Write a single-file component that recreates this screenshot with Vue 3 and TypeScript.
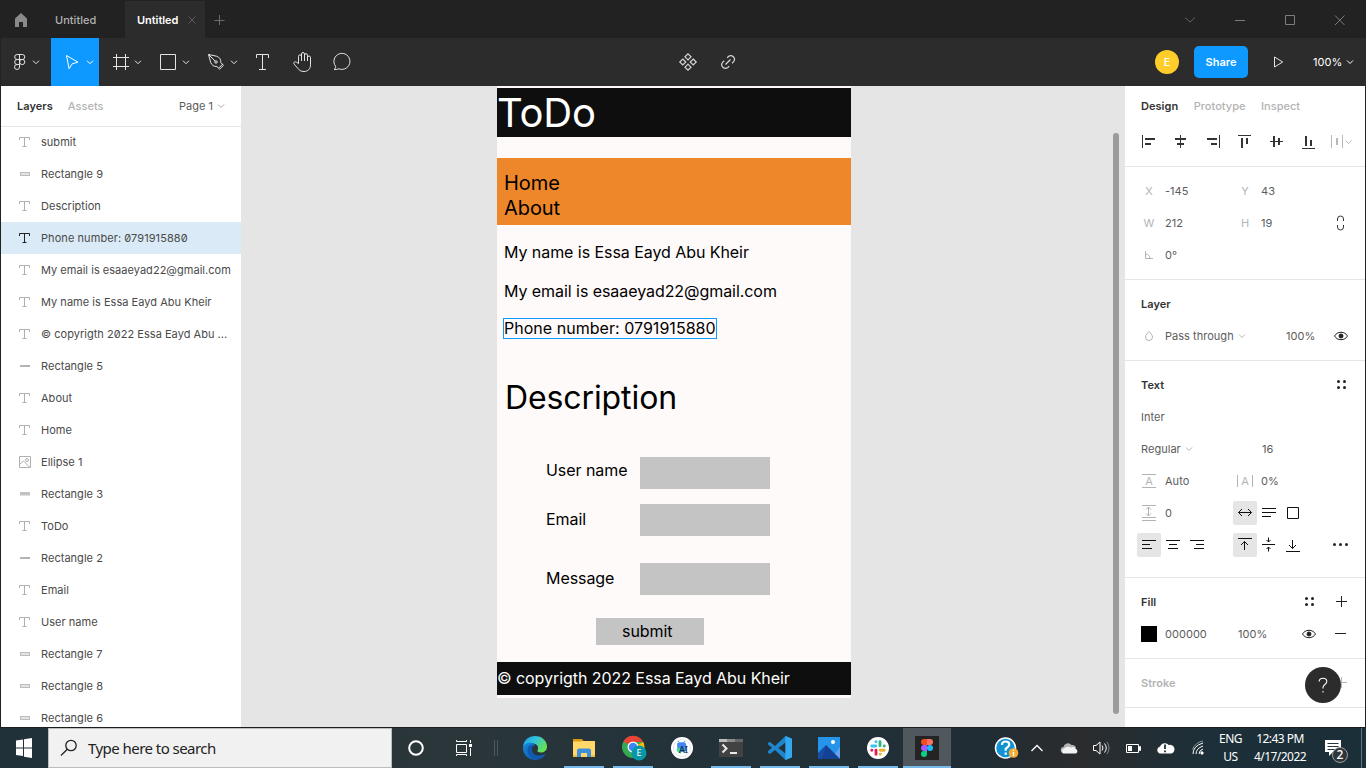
<script setup lang="ts">
type LayerKind = 'text' | 'bar' | 'thin' | 'mid' | 'image'

interface Layer {
  name: string
  kind: LayerKind
  selected?: boolean
}

const layers: Layer[] = [
  { name: 'submit', kind: 'text' },
  { name: 'Rectangle 9', kind: 'bar' },
  { name: 'Description', kind: 'text' },
  { name: 'Phone number: 0791915880', kind: 'text', selected: true },
  { name: 'My email is esaaeyad22@gmail.com', kind: 'text' },
  { name: 'My name is Essa Eayd Abu Kheir', kind: 'text' },
  { name: '© copyrigth 2022 Essa Eayd Abu ...', kind: 'text' },
  { name: 'Rectangle 5', kind: 'thin' },
  { name: 'About', kind: 'text' },
  { name: 'Home', kind: 'text' },
  { name: 'Ellipse 1', kind: 'image' },
  { name: 'Rectangle 3', kind: 'mid' },
  { name: 'ToDo', kind: 'text' },
  { name: 'Rectangle 2', kind: 'thin' },
  { name: 'Email', kind: 'text' },
  { name: 'User name', kind: 'text' },
  { name: 'Rectangle 7', kind: 'bar' },
  { name: 'Rectangle 8', kind: 'bar' },
  { name: 'Rectangle 6', kind: 'bar' },
]

// Each bar is [x, y, width, height] inside a 32px cell
type Bar = [number, number, number, number]
const alignments: Bar[][] = [
  [[9, 9, 1, 13], [12, 12, 10, 2], [12, 17, 6, 2]],
  [[15, 9, 1, 13], [10, 12, 11, 2], [12, 17, 7, 2]],
  [[22, 9, 1, 13], [10, 12, 10, 2], [14, 17, 6, 2]],
  [[9, 9, 13, 1], [12, 12, 2, 10], [17, 12, 2, 6]],
  [[9, 15, 13, 1], [12, 10, 2, 11], [17, 12, 2, 7]],
  [[9, 22, 13, 1], [12, 10, 2, 10], [17, 14, 2, 6]],
]
</script>

<template>
  <div class="screen">
    <header class="tabs">
      <svg class="home" width="54" height="38" viewBox="0 0 54 38"><path d="M15 18.5 21 13l6 5.500V27h-4v-5h-4v5h-4z" fill="#8a8a8a" /></svg>
      <span class="tab">Untitled</span>
      <span class="tab active">Untitled
        <svg width="8" height="8" viewBox="0 0 8 8"><path d="M.5.5l7 7M7.500.500l-7 7" stroke="#5c5c5c" /></svg>
      </span>
      <svg width="30" height="38" viewBox="0 0 30 38"><path d="M14.500 15v10M9.500 20.500h10" stroke="#6c6c6c" /></svg>
      <span class="grow"></span>
      <svg width="201" height="38" viewBox="0 0 201 38" fill="none" stroke="#7d7d7d">
        <path d="M20 17.500l5 4.500 5-4.500" stroke="#666" /><path d="M70 20.500h10M120.500 15.500h9v9h-9zM170 15.500l9.500 9.500M179.500 15.500l-9.500 9.500" />
      </svg>
    </header>

    <div class="toolbar">
      <svg width="50" height="48" viewBox="0 0 50 48" class="tool">
        <path d="M18.500 16.500h-2.300a2.500 2.500 0 0 0 0 5h2.300zM18.500 16.500h2.800a2.500 2.500 0 0 1 0 5h-2.800zM18.500 21.500h-2.300a2.500 2.500 0 0 0 0 5h2.300zM18.500 26.500h-2.300a2.500 2.500 0 1 0 2.300 2.500z" />
        <circle cx="21.200" cy="24" r="2.600" />
        <path d="M32 22.700l3 3 3-3" />
      </svg>
      <svg width="48" height="48" viewBox="0 0 48 48" class="tool on">
        <path d="M15.500 17.500l11.500 6.700-5.800 1.600-3.100 5z" /><path d="M36 22.700l3 3 3-3" />
      </svg>
      <svg width="48" height="48" viewBox="0 0 48 48" class="tool">
        <path d="M17.500 16v16M26.500 16v16M14 19.500h16M14 28.500h16M36 22.700l3 3 3-3" />
      </svg>
      <svg width="48" height="48" viewBox="0 0 48 48" class="tool">
        <path d="M13.500 16.500h15v15h-15zM36 22.700l3 3 3-3" />
      </svg>
      <svg width="48" height="48" viewBox="0 0 48 48" class="tool">
        <path d="M13.500 16.500l8 1.700c3 .8 4.500 3.300 4.300 6.300l2.700 2.900-3.900 3.800-2.700-2.700c-3 .2-5.200-1.400-6.200-4zM13.500 16.500l6.700 6.700M23.700 30l4-3.900" /><circle cx="21" cy="24" r="1.200" />
        <path d="M36 22.700l3 3 3-3" />
      </svg>
      <svg width="40" height="48" viewBox="0 0 40 48" class="tool">
        <path d="M13.500 20v-3.500h12V20M19.500 16.500v15M16 31.500h7" />
      </svg>
      <svg width="40" height="48" viewBox="0 0 40 48" class="tool">
        <path d="M15.500 25.500v-7a1.500 1.500 0 0 1 3-.2V23v-7a1.500 1.500 0 0 1 3 0v7-5.800a1.500 1.500 0 0 1 3 0V23v-3.500a1.500 1.500 0 0 1 3 0v7.300c0 4-2.500 6.700-6.500 6.700-3.200 0-4.800-1.300-6.300-3.300l-3.500-4c-1.300-1.600.7-3.200 2.200-2z" />
      </svg>
      <svg width="40" height="48" viewBox="0 0 40 48" class="tool">
        <path d="M11 31.500c1.400-1 1.800-1.900 1.600-3.200a8 8 0 1 1 3.300 2.500c-1.300.6-2.800.7-4.900.7z" />
      </svg>
      <svg class="middle" width="80" height="48" viewBox="0 0 80 48" fill="none" stroke="#d6d6d6" stroke-width="1.200">
        <path d="M20 15.800l3 3-3 3-3-3zM14.800 21l3 3-3 3-3-3zM25.200 21l3 3-3 3-3-3zM20 26.200l3 3-3 3-3-3z" />
        <path d="M57.500 26.500l5-5M59.200 19.800l1.200-1.300a3.700 3.700 0 0 1 5.200 5.200l-1.600 1.500M56.200 22.800l-1.600 1.500a3.700 3.700 0 0 0 5.200 5.200l1.300-1.300" />
      </svg>
      <span class="grow"></span>
      <span class="avatar">E</span>
      <span class="share">Share</span>
      <svg class="play" width="12" height="14" viewBox="0 0 12 14" fill="none" stroke="#e5e5e5"><path d="M1.500 2v10l8.200-5z" /></svg>
      <span class="zoom">100%</span>
      <svg class="zoomchev" width="8" height="6" viewBox="0 0 8 6" fill="none" stroke="#fff"><path d="M1 1.500l3 3 3-3" /></svg>
    </div>

    <main class="workspace">
      <aside class="left">
        <div class="lefthead">
          <b>Layers</b><b class="muted">Assets</b><span class="grow"></span><span>Page 1</span>
          <svg width="8" height="6" viewBox="0 0 8 6" fill="none" stroke="#a8a8a8"><path d="M1 1.500l3 3 3-3" /></svg>
        </div>
        <div v-for="layer in layers" :key="layer.name" class="layer" :class="{ selected: layer.selected }">
          <svg width="16" height="16" viewBox="0 0 16 16" fill="none" :stroke="layer.selected ? '#222' : '#b0b0b0'">
            <path v-if="layer.kind === 'text'" d="M2.500 6V3.500h10V6M7.500 3.500v9M5.500 12.500h4" />
            <rect v-else-if="layer.kind === 'bar'" x="3.500" y="6.500" width="9" height="3" fill="#e3e3e3" stroke="#bdbdbd" />
            <rect v-else-if="layer.kind === 'mid'" x="3" y="6" width="10" height="3.500" fill="#c2c2c2" stroke="none" />
            <rect v-else-if="layer.kind === 'thin'" x="3" y="7" width="10" height="2" fill="#b3b3b3" stroke="none" />
            <path v-else d="M2.500 2.500h11v11h-11zM3 10l3.500-3 6 6" />
            <circle v-if="layer.kind === 'image'" cx="10" cy="6" r="1.500" />
          </svg>
          <span>{{ layer.name }}</span>
        </div>
      </aside>

      <section class="canvas">
        <div class="artboard">
          <div class="shape black title-bar"></div>
          <span class="label todo">ToDo</span>
          <div class="shape orange"></div>
          <span class="label nav home-link">Home</span>
          <span class="label nav about-link">About</span>
          <span class="label name">My name is Essa Eayd Abu Kheir</span>
          <span class="label mail">My email is esaaeyad22@gmail.com</span>
          <span class="label phone">Phone number: 0791915880</span>
          <span class="label description">Description</span>
          <span class="label user">User name</span>
          <span class="label email">Email</span>
          <span class="label message">Message</span>
          <div class="shape field f1"></div>
          <div class="shape field f2"></div>
          <div class="shape field f3"></div>
          <div class="shape button"></div>
          <span class="label submit">submit</span>
          <div class="shape black footer"></div>
          <span class="label copy">© copyrigth 2022 Essa Eayd Abu Kheir</span>
        </div>
        <div class="scrollbar"></div>
      </section>

      <aside class="right">
        <div class="righthead"><b>Design</b><b class="muted">Prototype</b><b class="muted">Inspect</b></div>
        <div class="aligns">
          <svg v-for="(bars, i) in alignments" :key="i" width="32" height="32" viewBox="0 0 32 32" fill="#333">
            <rect v-for="(b, j) in bars" :key="j" :x="b[0]" :y="b[1]" :width="b[2]" :height="b[3]" />
          </svg>
          <svg width="32" height="32" viewBox="0 0 32 32" fill="#b8b8b8">
            <path d="M6 9h1v13H6zM17 9h1v13h-1zM11 12h2v7h-2z" /><path d="M20.500 14.500l3 3 3-3" fill="none" stroke="#b8b8b8" />
          </svg>
        </div>

        <div class="section">
          <div class="row">
            <span class="key">X</span><span class="val">-145</span><span class="key">Y</span><span class="val">43</span>
          </div>
          <div class="row">
            <span class="key">W</span><span class="val">212</span><span class="key">H</span><span class="val">19</span>
            <svg width="32" height="32" viewBox="0 0 32 32" fill="none" stroke="#333"><path d="M12.500 14v-2a3 3 0 0 1 3-3 3 3 0 0 1 3 3v2M12.500 18v2a3 3 0 0 0 3 3 3 3 0 0 0 3-3v-2" /></svg>
          </div>
          <div class="row">
            <svg width="32" height="32" viewBox="0 0 32 32" fill="none" stroke="#b3b3b3"><path d="M12.500 12v7.500h7.500M12.500 15c2.500 0 4.500 2 4.500 4.500" /></svg>
            <span class="val">0°</span>
          </div>
        </div>

        <div class="section">
          <div class="row head"><b>Layer</b></div>
          <div class="row">
            <svg width="32" height="32" viewBox="0 0 32 32" fill="none" stroke="#b3b3b3"><path d="M16 11.500c1.500 1.800 3.500 3.500 3.500 5.500a3.500 3.500 0 0 1-7 0c0-2 2-3.700 3.500-5.500z" /></svg>
            <span class="pass">Pass through</span>
            <svg class="chev" width="8" height="6" viewBox="0 0 8 6" fill="none" stroke="#b3b3b3"><path d="M1 1.500l3 3 3-3" /></svg>
            <span class="grow"></span><span class="opacity">100%</span>
            <svg width="32" height="32" viewBox="0 0 32 32" fill="none" stroke="#222"><path d="M9.500 16c1.300-2.300 3.600-3.700 6.500-3.700s5.200 1.400 6.500 3.700c-1.300 2.300-3.600 3.700-6.500 3.700S10.800 18.300 9.500 16z" /><circle cx="16" cy="16" r="2" fill="#222" /></svg>
          </div>
        </div>

        <div class="section text-section">
          <div class="row head"><b>Text</b><span class="grow"></span>
            <svg width="32" height="32" viewBox="0 0 32 32" fill="#222"><circle cx="13.500" cy="12.500" r="1.500" /><circle cx="19.500" cy="12.500" r="1.500" /><circle cx="13.500" cy="18.500" r="1.500" /><circle cx="19.500" cy="18.500" r="1.500" /></svg>
          </div>
          <div class="row head">Inter</div>
          <div class="row head"><span class="weight">Regular</span>
            <svg class="chev" width="8" height="6" viewBox="0 0 8 6" fill="none" stroke="#b3b3b3"><path d="M1 1.500l3 3 3-3" /></svg>
            <span class="grow"></span><span class="size">16</span>
          </div>
          <div class="row">
            <span class="key boxed-v">A</span><span class="val">Auto</span><span class="key boxed-h">A</span><span class="val">0%</span>
          </div>
          <div class="row">
            <svg width="32" height="32" viewBox="0 0 32 32" fill="none" stroke="#b3b3b3"><path d="M9 8.500h14M9 20.500h14M9 23.500h14M15.500 10v9M13 12.500l2.500-2.500 2.500 2.500M13 16.500l2.500 2.500 2.500-2.500" /></svg>
            <span class="val resize">0</span>
            <svg class="btn on" width="24" height="24" viewBox="0 0 24 24"><path d="M5.500 11.500h13M9 8l-3.500 3.500L9 15M15 8l3.500 3.500L15 15" /></svg>
            <svg class="btn" width="24" height="24" viewBox="0 0 24 24"><path d="M5 7.500h14M5 11.500h14M5 15.500h9" /></svg>
            <svg class="btn" width="24" height="24" viewBox="0 0 24 24"><path d="M6.500 6.500h11v11h-11z" /></svg>
          </div>
          <div class="row buttons">
            <svg class="btn on" width="24" height="24" viewBox="0 0 24 24"><path d="M5 7.500h14M5 11.500h8M5 15.500h10" /></svg>
            <svg class="btn" width="24" height="24" viewBox="0 0 24 24"><path d="M5 7.500h14M8 11.500h8M7 15.500h10" /></svg>
            <svg class="btn" width="24" height="24" viewBox="0 0 24 24"><path d="M5 7.500h14M11 11.500h8M9 15.500h10" /></svg>
            <svg class="btn on second" width="24" height="24" viewBox="0 0 24 24"><path d="M5 5.500h14M11.500 17V8.500M8 12l3.500-3.500L15 12" /></svg>
            <svg class="btn" width="24" height="24" viewBox="0 0 24 24"><path d="M5 11.500h13M11.500 4.500v4.500M9.500 7l2 2 2-2M11.500 18.500V14M9.500 16l2-2 2 2" /></svg>
            <svg class="btn" width="24" height="24" viewBox="0 0 24 24"><path d="M5 18.500h14M11.500 7v8.500M8 12l3.500 3.500L15 12" /></svg>
            <span class="grow"></span>
            <svg width="32" height="32" viewBox="0 0 32 32" fill="#222"><circle cx="9.500" cy="15.500" r="1.500" /><circle cx="15.500" cy="15.500" r="1.500" /><circle cx="21.500" cy="15.500" r="1.500" /></svg>
          </div>
        </div>

        <div class="section">
          <div class="row head"><b>Fill</b><span class="grow"></span>
            <svg width="32" height="32" viewBox="0 0 32 32" fill="#222"><circle cx="13.500" cy="12.500" r="1.500" /><circle cx="19.500" cy="12.500" r="1.500" /><circle cx="13.500" cy="18.500" r="1.500" /><circle cx="19.500" cy="18.500" r="1.500" /></svg>
            <svg width="32" height="32" viewBox="0 0 32 32" stroke="#222"><path d="M11 15.500h11M16.500 10v11" /></svg>
          </div>
          <div class="row head">
            <span class="swatch"></span><span class="hex">000000</span><span>100%</span><span class="grow"></span>
            <svg width="32" height="32" viewBox="0 0 32 32" fill="none" stroke="#222"><path d="M9.500 16c1.300-2.300 3.600-3.700 6.500-3.700s5.200 1.400 6.500 3.700c-1.300 2.300-3.600 3.700-6.500 3.700S10.800 18.300 9.500 16z" /><circle cx="16" cy="16" r="2" fill="#222" /></svg>
            <svg width="32" height="32" viewBox="0 0 32 32" stroke="#222"><path d="M10 15.500h11" /></svg>
          </div>
        </div>

        <div class="section">
          <div class="row head"><b class="muted">Stroke</b><span class="grow"></span>
            <svg width="32" height="32" viewBox="0 0 32 32" stroke="#b3b3b3"><path d="M11 15.500h11M16.500 10v11" /></svg>
          </div>
        </div>
        <div class="help"><svg width="36" height="36" viewBox="0 0 36 36" fill="none" stroke="#fff"><path d="M14.200 14.500c0-2 1.500-3.300 3.800-3.300s3.800 1.300 3.800 3.300c0 3-3.800 3-3.800 6v1M18 24v1.500" stroke-width="1.100" /></svg></div>
      </aside>
    </main>

    <footer class="taskbar">
      <svg width="48" height="40" viewBox="0 0 48 40" fill="#fff"><path d="M16 12.500l7-1v8h-7zM24 11.300l8-1.300v9.500h-8zM16 20.500h7v7.500l-7-1zM24 20.500h8V30l-8-1.300z" /></svg>
      <div class="search">
        <svg width="18" height="18" viewBox="0 0 18 18" fill="none" stroke="#222" stroke-width="1.300"><circle cx="11" cy="6.500" r="5.200" /><path d="M7.300 10.200L1 16.500" /></svg>
        <span>Type here to search</span>
      </div>
      <svg width="119" height="40" viewBox="0 0 119 40" fill="none" stroke="#fff">
        <circle cx="24" cy="20" r="6.800" stroke-width="2" />
        <path d="M64.500 12v1.500h10V12M64.500 16.500h10v8h-10zM64.500 28v-1.500h10V28M78.500 12v3M78.500 20v8" /><path d="M77 16h3v3h-3z" fill="#fff" stroke="none" />
        <path d="M102.500 12v16M105.500 12v16" stroke="#4d585d" />
      </svg>
      <div class="apps">
        <span class="app">
          <svg width="24" height="24" viewBox="0 0 24 24">
            <defs>
              <linearGradient id="edgeTop" x1="0" y1="0" x2="1" y2=".5"><stop offset="0" stop-color="#1a9be8" /><stop offset=".5" stop-color="#32c3dc" /><stop offset="1" stop-color="#67df55" /></linearGradient>
              <linearGradient id="edgeLow" x1="0" y1="0" x2="1" y2="1"><stop offset="0" stop-color="#1789dd" /><stop offset="1" stop-color="#104b9b" /></linearGradient>
            </defs>
            <path d="M0 12C0 4 6 0 12 0c7 0 12 5 12 10.500 0 4-3 6-6 6-2.500 0-4-1-3.500-2 2-4-1-7-4.500-7-5 0-9 2-10 4.500z" fill="url(#edgeTop)" />
            <path d="M0 12c1-5 6-6 9-5 2 .6 3 2 3 2-3 1-4 3.500-3 6.500 1.500 4.500 8 5.500 13.500 2.500C20.500 21.500 17 24 12 24 5 24 0 18.500 0 12z" fill="url(#edgeLow)" />
            <path d="M4.500 14c0-4 3.500-6 7.500-5-3 1-4 3.500-3 6.500 1.500 4.500 8 5.500 13.500 2.500-2 3.300-5 5-8.500 5-5.500 0-9.500-4.500-9.500-9z" fill="#0e5ab0" />
          </svg>
        </span>
        <span class="app open">
          <svg width="24" height="24" viewBox="0 0 24 24"><path d="M1 3h9l1.500 2H1z" fill="#dd9a10" /><path d="M1 5h22v16H1z" fill="#ffd868" /><path d="M1 3.500h9v2H1z" fill="#dd9a10" /><path d="M5 21v-6.500q0-2 2-2h10q2 0 2 2V21h-4v-4H9v4z" fill="#3d8edb" /><path d="M1 19h4v2H1zM19 19h4v2h-4z" fill="#f2bf43" /></svg>
        </span>
        <span class="app open">
          <svg class="chrome" width="26" height="26" viewBox="0 0 26 26"><circle cx="12" cy="12" r="11" fill="#34a853" /><path d="M12 12l10.300-5A11 11 0 0 1 12 23l4-8z" fill="#fbbc05" /><path d="M2.500 6.500A11 11 0 0 1 22 7H12v5z" fill="#ea4335" /><circle cx="12" cy="12" r="5.500" fill="#fff" /><circle cx="12" cy="12" r="4.300" fill="#4285f4" /><circle cx="18" cy="18" r="7.500" fill="#0797a7" /><text x="18" y="21.300" text-anchor="middle" font-size="9" fill="#fff">E</text></svg>
        </span>
        <span class="app">
          <svg width="24" height="24" viewBox="0 0 24 24"><circle cx="12" cy="12" r="11" fill="#fff" /><circle cx="12" cy="12" r="8.500" fill="none" stroke="#e2e7ea" /><path d="M7 7.500q5-2.500 9 0l.5 7q-4 3-9 0z" fill="#4285f4" /><path d="M6.500 13q1 4.500 5 4.500l-2-6z" fill="#3ddc84" /><path d="M8 5l1.500 2M15 5l-1.500 2" stroke="#4285f4" /><text x="13.500" y="16.500" text-anchor="middle" font-size="9" font-weight="500" fill="#073042">AI</text></svg>
        </span>
        <span class="app open">
          <svg width="24" height="20" viewBox="0 0 24 20"><path d="M0 1h24v18H0z" fill="#424242" /><path d="M0 1h8v3H0z" fill="#bdbdbd" /><path d="M8 1h8v3H8z" fill="#8b8b8b" /><path d="M16 1h8v3h-8z" fill="#666" /><path d="M3.500 6.500l4 4-4 4M11 15h7" fill="none" stroke="#e9e9e9" stroke-width="2" /></svg>
        </span>
        <span class="app open">
          <svg width="24" height="24" viewBox="0 0 24 24"><path d="M17.500 0L24 2.700v18.600L17.500 24 7 14l-5 4-2-1.200V15l4-3.200L0 8.500V6.800L2 6l5 4zM17.500 6.500L10.500 12l7 5.500z" fill="#1f86cc" fill-rule="evenodd" /><path d="M17.500 0L24 2.700v18.600L17.500 24z" fill="#32a9f0" /></svg>
        </span>
        <span class="app open">
          <svg width="22" height="22" viewBox="0 0 22 22"><path d="M0 0h22v22H0z" fill="#2594eb" /><path d="M22 10v12h-9z" fill="#69a1ef" /><path d="M0 16l8-8 14 14H0z" fill="#164da5" /><path d="M8 8l14 14H4z" fill="#123a89" opacity=".55" /><circle cx="15" cy="5" r="2" fill="#fff" /></svg>
        </span>
        <span class="app open">
          <svg width="22" height="22" viewBox="0 0 22 22" fill="none" stroke-width="2.900" stroke-linecap="round"><circle cx="11" cy="11" r="11" fill="#fff" /><path d="M4.800 9h4M9 4.700h.1" stroke="#36c5f0" /><path d="M13 4.800v4M17.200 9h.1" stroke="#2eb67d" /><path d="M9 13.200v4M4.800 13.200h.1" stroke="#e01e5a" /><path d="M13.200 13.200h4M13.200 17.300h.1" stroke="#ecb22e" /></svg>
        </span>
        <span class="app open current">
          <svg width="24" height="24" viewBox="0 0 24 24"><rect width="24" height="24" rx="1" fill="#242424" /><path d="M12 3H9a3 3 0 0 0 0 6h3z" fill="#f24e1e" /><path d="M12 3h3a3 3 0 0 1 0 6h-3z" fill="#ff7262" /><path d="M12 9H9a3 3 0 0 0 0 6h3z" fill="#a259ff" /><circle cx="15" cy="12" r="3" fill="#1abcfe" /><path d="M12 15H9a3 3 0 1 0 3 3z" fill="#0acf83" /></svg>
        </span>
      </div>
      <span class="grow"></span>
      <svg width="224" height="40" viewBox="0 0 224 40" fill="none" stroke="#fff">
        <circle cx="15.500" cy="20" r="10" fill="#1192d4" stroke-width="1.500" />
        <path d="M12 17q0-3.500 3.700-3.500 3.500 0 3.500 3 0 2-3.500 4.200v2M15.700 24.500v2.200" stroke-width="2.200" />
        <circle cx="23.500" cy="25" r="4.800" fill="#f4ad32" stroke="none" /><path d="M23.500 24v4M23.500 21.700v1.200" stroke-width="1.400" />
        <path d="M41.500 23l5.500-5.500 5.500 5.500" stroke-width="1.300" />
        <path d="M74 25a3 3 0 0 1-.5-6 4.500 4.500 0 0 1 8-2 4 4 0 0 1 4.500 3z" fill="#b5b5b5" stroke="none" /><path d="M73 25.500a3 3 0 0 1 1-5 6 6 0 0 1 7-1 4 4 0 0 1 5 1.500 2.500 2.500 0 0 1 0 4.500z" fill="#f3f3f3" stroke="none" />
        <path d="M103.500 17.500h2.500l4-3.500v12l-4-3.500h-2.500zM112 17.500q2 2.500 0 5M114.500 15.500q3.500 4.500 0 9" /><path d="M117 14q4 6 0 12" stroke="#7d8588" />
        <path d="M136.500 16.500h12v8h-12zM149.500 18.500h1v4h-1z" /><path d="M138 18h4v5h-4z" fill="#fff" stroke="none" />
        <path d="M169.500 25.500a3.700 3.700 0 0 1 .5-7 5 5 0 0 1 8.500-1.500 4.300 4.300 0 0 1 3 8.500z" fill="#fff" stroke="none" /><path d="M175 16.500v4.500M175 22.500v1.700" stroke="#1f2f37" stroke-width="1.800" />
        <path d="M203 26q0-8 10-11M206 26q0-5.500 7-8M209 26q0-3.500 4-5" /><path d="M202.500 21.500q2.500-7 10.500-8.500" stroke="#8d9699" /><circle cx="212" cy="25" r="1.200" fill="#fff" />
      </svg>
      <span class="lang">ENG<br>US</span>
      <span class="clock">12:43 PM<br>4/17/2022</span>
      <svg width="54" height="40" viewBox="0 0 54 40"><path d="M13 12h16v12h-8l-4 4v-4h-4z" fill="#fff" /><path d="M15.500 15.500h11M15.500 18.500h11M15.500 21.500h7" stroke="#25343b" /><circle cx="28" cy="27" r="7.500" fill="#303638" stroke="#9b9fa1" /><text x="28" y="31.200" text-anchor="middle" font-size="12" font-weight="500" fill="#fff">2</text><path d="M49.500 0v40" stroke="#66747b" /></svg>
    </footer>
  </div>
</template>

<style>
html, body { margin: 0; overflow: hidden; background: #222; }
</style>

<style scoped>
.screen { width: 1366px; height: 768px; display: flex; flex-direction: column; overflow: hidden; font: 11px/16px Inter, "Noto Sans", sans-serif; letter-spacing: .03px; color: #5c5c5c; background: #222; }
.screen *, .screen *::before { box-sizing: border-box; }
svg { display: block; flex: none; }
b { font-weight: 600; color: #333; }
.muted { color: #b3b3b3; }
.grow { flex: 1; }

.tabs { height: 38px; flex: none; display: flex; align-items: center; background: #222; }
.tab { width: 71px; height: 37px; margin-top: 1px; display: flex; align-items: center; padding-left: 1px; color: #b3b3b3; font-weight: 500; }
.tab.active { width: 80px; padding: 0 9px 0 12px; justify-content: space-between; background: #2c2c2c; color: #fff; font-weight: 600; letter-spacing: -.05px; }

.toolbar { height: 48px; flex: none; display: flex; align-items: center; margin-left: 1px; padding-right: 12px; background: #2c2c2c; color: #fff; }
.tool { fill: none; stroke: #e5e5e5; }
.tool.on { background: #0d99ff; stroke: #fff; }
.middle { margin-left: 305px; }
.avatar { width: 24px; height: 24px; border-radius: 50%; background: #ffcd29; text-align: center; line-height: 24px; font-weight: 500; }
.share { width: 54px; height: 32px; margin: 0 25px 0 15px; border-radius: 5px; background: #0d99ff; text-align: center; line-height: 32px; font-weight: 600; }
.zoom { width: 33px; margin-left: 28px; }

.workspace { height: 641px; flex: none; display: flex; margin: 0 1px; background: #e5e5e5; }
.left { width: 240px; overflow: hidden; background: #fff; }
.lefthead { height: 40px; display: flex; align-items: center; padding: 0 16px; }
.lefthead .muted { margin-left: 15px; font-weight: 500; }
.lefthead svg { margin-left: 4px; }
.layer { height: 32px; display: flex; align-items: center; gap: 8px; padding-left: 16px; white-space: nowrap; color: #4a4a4a; font-feature-settings: "zero"; }
.lefthead + .layer { border-top: 1px solid #e5e5e5; padding-bottom: 1px; }
.selected { background: #daebf7; letter-spacing: .07px; }

.canvas { width: 884px; position: relative; overflow: hidden; }
.artboard { position: absolute; left: 256px; top: 0; width: 354px; height: 612px; background: #fffafa; }
.shape, .label { position: absolute; }
.label { left: 7px; font-size: 16px; line-height: 19px; letter-spacing: -.06px; color: #000; white-space: nowrap; }
.black { left: 0; width: 354px; background: #0e0e0e; }
.title-bar { top: 2px; height: 49px; }
.todo { left: 0; top: 3px; font-size: 40px; line-height: 48px; letter-spacing: -.2px; color: #fff; }
.orange { left: 0; top: 72px; width: 354px; height: 67px; background: #ee8729; }
.nav { font-size: 20px; line-height: 24px; }
.home-link { top: 85px; }
.about-link { top: 110px; }
.name { top: 157px; }
.mail { top: 196px; }
.phone { left: 6px; top: 232px; width: 214px; height: 21px; border: 1px solid #0d99ff; letter-spacing: .03px; }
.description { left: 8px; top: 292px; font-size: 32px; line-height: 39px; letter-spacing: -.1px; }
.user, .email, .message { left: 49px; }
.user { top: 375px; }
.email { top: 424px; }
.message { top: 483px; }
.field { left: 143px; width: 130px; height: 32px; background: #c4c4c4; }
.f1 { top: 371px; }
.f2 { top: 418px; }
.f3 { top: 477px; }
.button { left: 99px; top: 532px; width: 108px; height: 27px; background: #c4c4c4; }
.submit { left: 125px; top: 536px; }
.footer { top: 576px; height: 33px; }
.copy { left: 0; top: 583px; color: #fff; }
.scrollbar { position: absolute; right: 6px; top: 47px; width: 6px; height: 581px; border-radius: 3px; background: #9c9c9c; }

.right { position: relative; width: 240px; overflow: hidden; background: #fff; }
.righthead { height: 40px; display: flex; align-items: center; gap: 15.5px; padding-left: 16px; }
.righthead .muted { font-weight: 500; }
.aligns { height: 41px; display: flex; padding-left: 8px; border-bottom: 1px solid #e5e5e5; }
.section { padding: 8px; border-bottom: 1px solid #e5e5e5; }
.text-section { padding-bottom: 16px; }
.row { height: 32px; display: flex; align-items: center; }
.head { padding-left: 8px; }
.key { width: 32px; text-align: center; color: #b3b3b3; }
.val { width: 64px; }
.pass { width: 73px; }
.opacity { width: 39px; }
.weight { width: 44px; }
.size { width: 95px; }
.boxed-v { width: 14px; height: 14px; margin: 0 9px; line-height: 12px; border: solid #b3b3b3; border-width: 1px 0; }
.boxed-h { width: 16px; height: 12px; margin: 0 8px; line-height: 12px; border: solid #b3b3b3; border-width: 0 1px; }
.resize { width: 68px; }
.btn { fill: none; stroke: #111; border-radius: 2px; }
.btn.on { background: #e5e5e5; }
.buttons { padding-left: 4px; }
.second { margin-left: 24px; }
.swatch { width: 16px; height: 16px; background: #000; }
.hex { width: 81px; padding-left: 8px; }
.help { position: absolute; left: 180px; top: 581px; width: 36px; height: 36px; border-radius: 50%; background: #2c2c2c; }

.taskbar { height: 41px; flex: none; display: flex; border-top: 1px solid #1b1d1f; background: linear-gradient(90deg, #213139 0, #2b363a 33%, #24333a 46%, #202d34 72%, #2b2c2e 79%, #1d2f38 88%, #1b2f39); color: #fff; font-family: "Noto Sans", sans-serif; letter-spacing: 0; }
.search { width: 344px; height: 40px; display: flex; align-items: center; gap: 10px; padding-left: 11px; border: 1px solid #bdbdbd; background: #f1f1f1; color: #222; font-size: 15px; letter-spacing: -.55px; }
.apps { display: flex; gap: 1px; }
.app { position: relative; width: 48px; height: 40px; display: flex; align-items: center; justify-content: center; }
.chrome { margin-left: 2px; }
.open::before { content: ""; position: absolute; left: 4px; right: 4px; bottom: 0; height: 2px; background: #76b9ed; }
.current { background: #50585e; }
.current::before { left: 0; right: 0; }
.lang, .clock { font-size: 12px; line-height: 18px; text-align: center; padding-top: 2px; letter-spacing: -.55px; }
.lang { width: 30px; padding-left: 3px; }
.clock { width: 68px; padding-left: 4px; }
</style>
